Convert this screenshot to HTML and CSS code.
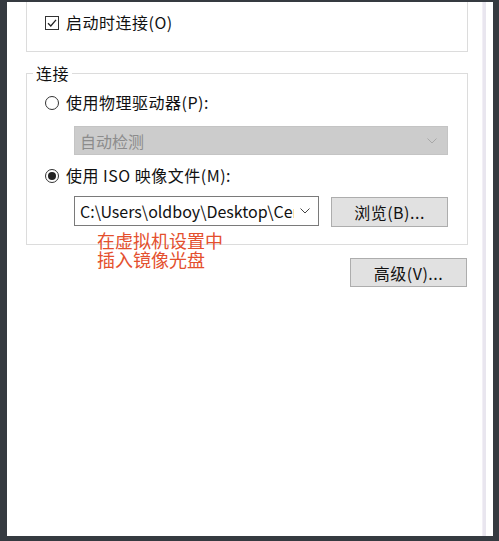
FILE: index.html
```html
<!DOCTYPE html>
<html lang="zh-CN">
<head>
<meta charset="utf-8">
<link rel="stylesheet" href="styles.css">
</head>
<body>
<div class="window">
  <div class="content">
    <div class="group group-top">
      <label class="row">
        <span class="check">
          <svg width="14" height="14" viewBox="0 0 14 14"><rect x="0.5" y="0.5" width="13" height="13" fill="#fff" stroke="#333"/><path d="M3 7.2 L5.8 10 L11 3.8" fill="none" stroke="#222" stroke-width="1.3"/></svg>
        </span>
        <span class="txt">启动时连接(O)</span>
      </label>
    </div>

    <fieldset class="group group-conn">
      <legend class="legend">连接</legend>
      <div class="row">
        <span class="radio"></span>
        <span class="txt">使用物理驱动器(P):</span>
      </div>
      <div class="select disabled">
        <span class="sel-text">自动检测</span>
        <svg class="chev" width="10" height="6" viewBox="0 0 10 6"><path d="M0.5 0.5 L5 5 L9.5 0.5" fill="none" stroke="#a8a8a8" stroke-width="1"/></svg>
      </div>
      <div class="row row2">
        <span class="radio on"><span class="dot"></span></span>
        <span class="txt">使用 ISO 映像文件(M):</span>
      </div>
      <div class="iso-row">
        <div class="select combo">
          <span class="sel-text">C:\Users\oldboy\Desktop\CentOS</span>
          <svg class="chev" width="10" height="6" viewBox="0 0 10 6"><path d="M0.5 0.5 L5 5 L9.5 0.5" fill="none" stroke="#444" stroke-width="1"/></svg>
        </div>
        <button class="btn">浏览(B)...</button>
      </div>
    </fieldset>

    <div class="actions">
      <button class="btn adv">高级(V)...</button>
    </div>

    <div class="note">在虚拟机设置中<br>插入镜像光盘</div>
  </div>
  <div class="strip"></div>
</div>
</body>
</html>
```

FILE: styles.css
```css
html, body {
  margin: 0;
  padding: 0;
  background: #353a40;
  overflow: hidden;
}
body {
  box-sizing: border-box;
  height: 541px;
  padding: 2px 0 0 7px;
  font-family: "Noto Sans CJK SC", "Noto Sans", sans-serif;
  font-size: 16px;
  color: #111;
}
.window {
  width: 486px;
  height: 534px;
  background: #fff;
  display: flex;
}
.content {
  position: relative;
  width: 475px;
}
.strip {
  width: 3px;
  background: #e9e6ef;
  border-left: 1px solid #f2eff6;
}
.group {
  box-sizing: border-box;
  width: 442px;
  margin: 0 0 0 19px;
  border: 1px solid #dcdcdc;
}
.group-top {
  border-top: none;
  height: 50px;
  padding: 10px 0 0 18px;
}
.row {
  display: flex;
  align-items: center;
  height: 20px;
  gap: 7px;
}
.txt {
  line-height: 20px;
  white-space: nowrap;
  letter-spacing: 0.5px;
}
.check {
  display: flex;
  width: 14px;
  height: 14px;
  margin-top: 1px;
}
.group-conn {
  margin-top: 12px;
  padding: 10px 0 17px 18px;
  min-width: 0;
}
.legend {
  padding: 0 3px;
  margin-left: -12px;
  line-height: 18px;
  font-size: 16px;
  letter-spacing: 0.5px;
}
.radio {
  box-sizing: border-box;
  width: 14px;
  height: 14px;
  border: 1px solid #333;
  border-radius: 50%;
  display: flex;
  align-items: center;
  justify-content: center;
  margin-top: 1px;
}
.dot {
  width: 8px;
  height: 8px;
  border-radius: 50%;
  background: #222;
}
.select {
  box-sizing: border-box;
  display: flex;
  align-items: center;
  justify-content: space-between;
  padding: 0 10px 0 5px;
  overflow: hidden;
}
.select.disabled {
  margin: 14px 0 0 29px;
  width: 374px;
  height: 29px;
  background: #cccccc;
  border: 1px solid #c4c4c4;
  color: #8c8c8c;
}
.sel-text {
  white-space: nowrap;
  overflow: hidden;
}
.chev {
  flex: none;
  margin-left: 4px;
}
.row2 {
  margin-top: 10px;
}
.iso-row {
  display: flex;
  gap: 12px;
  margin: 11px 0 0 29px;
  height: 31px;
}
.combo {
  width: 245px;
  height: 30px;
  border: 1px solid #7a7a7a;
  background: #fff;
  color: #111;
  padding: 0 8px 0 5px;
}
.combo .sel-text {
  width: 214px;
  margin-right: auto;
  text-overflow: clip;
}
.btn {
  box-sizing: border-box;
  width: 117px;
  height: 30px;
  margin-top: 1px;
  background: #e1e1e1;
  border: 1px solid #adadad;
  font-family: inherit;
  font-size: 16px;
  letter-spacing: 0.5px;
  color: #111;
  padding: 0;
}
.actions {
  width: 460px;
  display: flex;
  justify-content: flex-end;
  margin-top: 13px;
}
.adv {
  height: 29px;
  margin-top: 0;
}
.note {
  position: absolute;
  left: 90px;
  top: 229px;
  font-size: 18px;
  line-height: 19px;
  color: #e4502e;
  pointer-events: none;
}
```
